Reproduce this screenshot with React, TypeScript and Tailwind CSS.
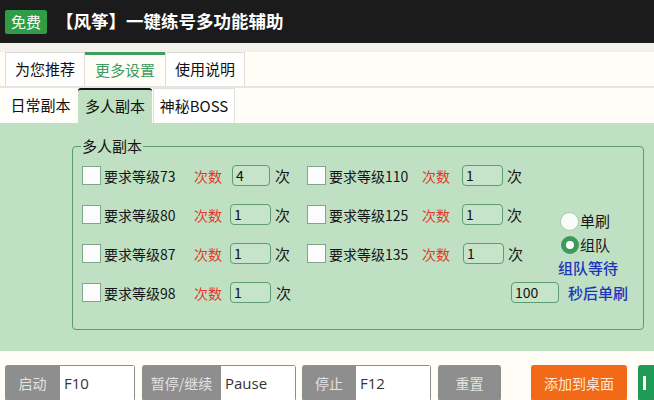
import React from "react";

type RowProps = {
  level: string;
  count: string;
  labelW: string;
  inputCls: string;
  tailCls: string;
};

function LevelRow({ level, count, labelW, inputCls, tailCls }: RowProps) {
  return (
    <div className="h-[39px] flex items-center">
      {/* checkbox */}
      <span className="w-[19px] h-[19px] bg-[#fbfcfb] border border-[#7ea88c] shrink-0" />
      <span className={`ml-[3px] text-[14px] leading-[18px] text-[#161616] ${labelW}`}>
        要求等级{level}
      </span>
      <span className="text-[14px] leading-[18px] text-[#e2382a]">次数</span>
      <span
        className={`h-[21px] flex items-center pl-[3px] text-[14px] text-[#111] bg-[#c6e4c9] border-[1.5px] border-[#5f9c71] rounded-[4px] ${inputCls}`}
      >
        {count}
      </span>
      <span className={`text-[15px] leading-[18px] text-[#161616] ${tailCls}`}>次</span>
    </div>
  );
}

export default function App() {
  return (
    <div className="w-[654px] h-[400px] overflow-hidden bg-[#fffdf6] font-['Noto_Sans_CJK_SC','Noto_Sans',sans-serif] text-[#111]">
      {/* title bar */}
      <div className="h-[43px] bg-[#1b1b1b] flex items-center pl-[5px] gap-[9px]">
        <span className="bg-[#2f9d47] text-white text-[15px] leading-[24px] px-[6px] rounded-[2px]">
          免费
        </span>
        <span className="text-white text-[17.5px] font-bold">【风筝】一键练号多功能辅助</span>
      </div>

      <div className="h-[9px] bg-[#f2f1ec]" />

      {/* top tabs */}
      <div className="h-[36px] flex pl-[5px] border-b-2 border-[#e6e5df]">
        <div className="w-[80px] flex items-center justify-center bg-white border border-b-0 border-[#dddcd6] text-[15px]">
          为您推荐
        </div>
        <div className="w-[80px] flex items-center justify-center bg-[#fffdf6] border-t-[3px] border-[#3f9d62] text-[15px] text-[#3f9b63]">
          更多设置
        </div>
        <div className="w-[80px] flex items-center justify-center bg-white border border-b-0 border-[#dddcd6] text-[15px]">
          使用说明
        </div>
      </div>

      {/* sub tabs */}
      <div className="h-[35px] flex pl-[3px] items-stretch">
        <div className="w-[75px] flex items-center justify-center bg-[#fffefa] text-[15px]">日常副本</div>
        <div className="w-[74px] flex items-center justify-center bg-[#bfe0c2] border-t-2 border-[#161616] rounded-t-[3px] text-[15px]">
          多人副本
        </div>
        <div className="w-[82px] flex items-center justify-center bg-white border border-b-0 border-[#e2e1db] text-[15px] ml-[1px]">
          神秘BOSS
        </div>
      </div>

      {/* green panel */}
      <div className="h-[228px] bg-[#bfe0c2] pl-[72px] pr-[10px] pt-[15px]">
        <fieldset className="border border-[#5c9b6e] rounded-[4px] pl-[9px] pt-[2px] pb-[17px]">
          <legend className="-ml-[1px] px-[1px] text-[15px] leading-[16px] text-[#161616]">多人副本</legend>
          <div className="flex">
            <div className="w-[225px] flex flex-col">
              <LevelRow level="73" count="4" labelW="w-[90px]" inputCls="ml-[10px] w-[38px]" tailCls="ml-[5px]" />
              <LevelRow level="80" count="1" labelW="w-[90px]" inputCls="ml-[8px] w-[41px]" tailCls="ml-[4px]" />
              <LevelRow level="87" count="1" labelW="w-[90px]" inputCls="ml-[8px] w-[41px]" tailCls="ml-[4px]" />
              <LevelRow level="98" count="1" labelW="w-[90px]" inputCls="ml-[8px] w-[41px]" tailCls="ml-[5px]" />
            </div>
            <div className="flex-1 flex flex-col">
              <div className="flex">
                <div className="w-[216px] flex flex-col">
                  <LevelRow level="110" count="1" labelW="w-[93px]" inputCls="ml-[12px] w-[41px]" tailCls="ml-[4px]" />
                  <LevelRow level="125" count="1" labelW="w-[93px]" inputCls="ml-[12px] w-[41px]" tailCls="ml-[4px]" />
                  <LevelRow level="135" count="1" labelW="w-[93px]" inputCls="ml-[13px] w-[41px]" tailCls="ml-[4px]" />
                </div>
                {/* radios */}
                <div className="flex flex-col pl-[35px] pt-[55px]">
                  <label className="flex items-center ml-[2px] h-[20px]">
                    <span className="w-[19px] h-[19px] rounded-full bg-[#fafcfa] border border-[#a9c9b1]" />
                    <span className="ml-[1px] text-[15px] leading-[18px] text-[#161616]">单刷</span>
                  </label>
                  <label className="flex items-center ml-[3px] mt-[4px] h-[20px]">
                    <span className="w-[18px] h-[18px] rounded-full bg-white border-[5px] border-[#3e9a5c]" />
                    <span className="ml-[1px] text-[15px] leading-[18px] text-[#161616]">组队</span>
                  </label>
                  <span className="mt-[4px] -mb-[4px] text-[15px] leading-[17px] text-[#2034bd] font-medium">
                    组队等待
                  </span>
                </div>
              </div>
              <div className="h-[39px] flex items-center pl-[204px]">
                <span className="w-[48px] h-[21px] flex items-center pl-[3px] text-[14px] text-[#111] bg-[#c6e4c9] border-[1.5px] border-[#5f9c71] rounded-[4px]">
                  100
                </span>
                <span className="ml-[9px] text-[15px] leading-[18px] text-[#2034bd] font-medium">秒后单刷</span>
              </div>
            </div>
          </div>
        </fieldset>
      </div>

      {/* bottom bar */}
      <div className="pt-[14px] pl-[5px] flex items-start whitespace-nowrap">
        <div className="shrink-0 h-[36px] flex bg-[#8e8e8e] rounded-[3px] pr-[1px] pt-[1px]">
          <span className="w-[55px] flex items-center justify-center text-[14px] text-[#e4e4e4]">启动</span>
          <span className="w-[74px] bg-white flex items-center pl-[4px] text-[15px] text-[#333] font-['Open_Sans',sans-serif]">
            F10
          </span>
        </div>
        <div className="shrink-0 ml-[7px] h-[36px] flex bg-[#8e8e8e] rounded-[3px] pr-[1px] pt-[1px]">
          <span className="w-[79px] flex items-center justify-center text-[14px] text-[#e4e4e4]">暂停/继续</span>
          <span className="w-[74px] bg-white flex items-center pl-[4px] text-[15px] text-[#333] font-['Open_Sans',sans-serif]">
            Pause
          </span>
        </div>
        <div className="shrink-0 ml-[6px] h-[36px] flex bg-[#8e8e8e] rounded-[3px] pr-[1px] pt-[1px]">
          <span className="w-[54px] flex items-center justify-center text-[14px] text-[#e4e4e4]">停止</span>
          <span className="w-[74px] bg-white flex items-center pl-[4px] text-[15px] text-[#333] font-['Open_Sans',sans-serif]">
            F12
          </span>
        </div>
        <div className="shrink-0 ml-[7px] w-[63px] h-[36px] flex items-center justify-center bg-[#8e8e8e] rounded-[3px] text-[14px] text-[#e4e4e4]">
          重置
        </div>
        <div className="shrink-0 ml-[30px] w-[96px] h-[36px] flex items-center justify-center bg-[#f26a17] rounded-[3px] text-[14px] text-[#ffe9d6]">
          添加到桌面
        </div>
        <div className="shrink-0 ml-[11px] w-[90px] h-[36px] flex items-center pl-[5px] bg-[#1f9b57] rounded-[3px]">
          <svg width="6" height="14" viewBox="0 0 6 14">
            <rect x="0" y="0" width="3" height="14" fill="#ffffff" />
          </svg>
        </div>
      </div>
    </div>
  );
}
